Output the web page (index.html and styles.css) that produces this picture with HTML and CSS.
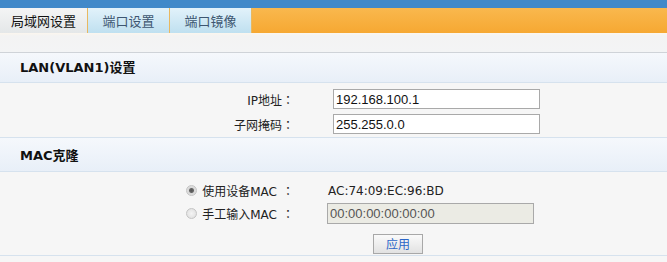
FILE: index.html
```html
<!DOCTYPE html>
<html lang="zh-CN">
<head>
  <meta charset="UTF-8">
  <title>局域网设置</title>
  <link rel="stylesheet" href="styles.css">
</head>
<body>
<div class="topbar"></div>

<div class="tabs">
  <a class="tab active" href="#">局域网设置</a>
  <a class="tab" href="#">端口设置</a>
  <a class="tab" href="#">端口镜像</a>
  <div class="tab-fill"></div>
</div>

<div class="strip"></div>

<div class="section-head">LAN(VLAN1)设置</div>
<div class="section-body lan">
  <label class="label" for="ip">IP地址<span class="colon">：</span></label>
  <input class="field" id="ip" value="192.168.100.1">
  <label class="label" for="mask">子网掩码<span class="colon">：</span></label>
  <input class="field" id="mask" value="255.255.0.0">
</div>

<div class="section-head tall">MAC克隆</div>
<div class="section-body mac">
  <label class="label radio-label"><span class="radio checked"></span>使用设备MAC<span class="colon">：</span></label>
  <span class="mac-value">AC:74:09:EC:96:BD</span>
  <label class="label radio-label"><span class="radio"></span>手工输入MAC<span class="colon">：</span></label>
  <input class="field disabled" value="00:00:00:00:00:00" disabled>
  <span></span>
  <div class="actions"><a class="btn" href="#">应用</a></div>
</div>
</body>
</html>
```

FILE: styles.css
```css
body {
  margin: 0;
  background-color: #f6f6f6;
  font-family: "DejaVu Sans", "Noto Sans CJK SC", sans-serif;
  font-size: 12px;
  color: #222;
}

.topbar {
  height: 8px;
  background-color: #4189c9;
}

.tabs {
  display: flex;
  height: 25px;
}

.tab {
  display: flex;
  align-items: center;
  justify-content: center;
  width: 81px;
  font-family: "Noto Sans CJK SC", sans-serif;
  font-size: 13px;
  color: #3d5670;
  text-decoration: none;
  background: linear-gradient(#e2f2fa, #bfe0f0);
  border-right: 1px solid #e8b860;
}

.tab.active {
  width: 87px;
  color: #111;
  background: linear-gradient(#f4f5f5, #e4e7e8);
}

.tab-fill {
  flex: 1;
  background: linear-gradient(#f9b84e, #f6a832);
}

.strip {
  height: 19px;
  background: linear-gradient(#fbf6ee 0, #f3f3f3 3px, #f3f4f5);
  border-bottom: 1px solid #cfd3d8;
}

.section-head {
  height: 29px;
  line-height: 29px;
  padding-left: 20px;
  font-weight: bold;
  font-size: 13px;
  color: #111;
  background: linear-gradient(#f5f8fc, #e8eff8);
  border-bottom: 1px solid #d6e2ee;
}

.section-head.tall {
  height: 33px;
  line-height: 36px;
}

.section-body {
  display: grid;
  grid-template-columns: 294px 207px;
  align-items: center;
  background-color: #f6f6f6;
  border-bottom: 1px solid #d6e2ee;
}

.lan {
  column-gap: 39px;
  row-gap: 5px;
  padding: 6px 0 3px;
}

.mac {
  column-gap: 33px;
  row-gap: 2px;
  padding: 8px 0 1px;
}

.label {
  text-align: right;
  font-family: "DejaVu Sans", "Noto Sans CJK SC", sans-serif;
  font-size: 12px;
  color: #222;
  text-spacing-trim: space-all;
}

.colon {
  display: inline-block;
  width: 12px;
  text-align: center;
  font-family: "Noto Sans CJK JP", sans-serif;
}

.field {
  box-sizing: border-box;
  height: 20px;
  padding: 0 2px;
  font-family: "Liberation Sans", sans-serif;
  font-size: 13px;
  color: #111;
  background-color: #fff;
  border: 1px solid #a9a9a9;
}

.field.disabled {
  height: 21px;
  color: #555;
  background-color: #ebebe4;
}

.radio-label {
  display: flex;
  align-items: center;
  justify-content: flex-end;
  gap: 5px;
  height: 21px;
}

.radio {
  box-sizing: border-box;
  width: 11px;
  height: 11px;
  border-radius: 50%;
  border: 1px solid #c4c4c4;
  background: radial-gradient(#f4f4f4, #dcdcdc);
}

.radio.checked {
  background: radial-gradient(#555 0, #666 2px, #d8d8d8 3px, #e8e8e8);
}

.mac-value {
  padding-left: 1px;
  color: #222;
}

.actions {
  padding: 8px 0 0 46px;
}

.btn {
  display: inline-block;
  box-sizing: border-box;
  width: 50px;
  height: 20px;
  line-height: 18px;
  text-align: center;
  font-family: "Noto Sans CJK SC", sans-serif;
  font-size: 12px;
  color: #2b66c8;
  text-decoration: none;
  background: linear-gradient(#fafafa, #e2e2e2);
  border: 1px solid #a8a8a8;
}
```
